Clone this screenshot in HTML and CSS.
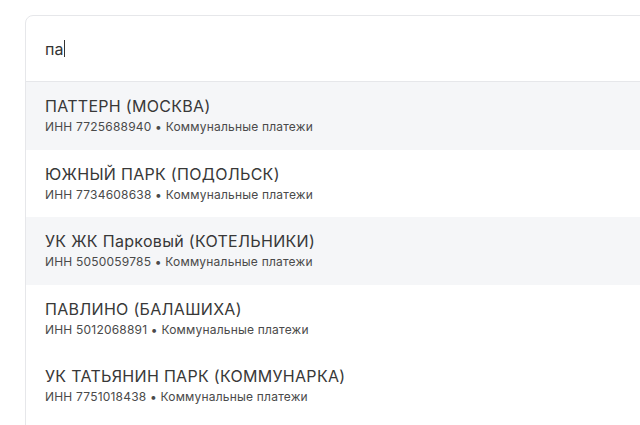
FILE: index.html
```html
<!DOCTYPE html>
<html lang="ru">
<head>
<meta charset="utf-8">
<link rel="stylesheet" href="styles.css">
</head>
<body>
<div class="card">
  <div class="search">
    <span class="query">па</span><span class="caret"></span>
  </div>
  <ul class="list">
    <li class="item alt">
      <div class="title">ПАТТЕРН (МОСКВА)</div>
      <div class="meta">ИНН 7725688940 • Коммунальные платежи</div>
    </li>
    <li class="item">
      <div class="title">ЮЖНЫЙ ПАРК (ПОДОЛЬСК)</div>
      <div class="meta">ИНН 7734608638 • Коммунальные платежи</div>
    </li>
    <li class="item alt">
      <div class="title">УК ЖК Парковый (КОТЕЛЬНИКИ)</div>
      <div class="meta">ИНН 5050059785 • Коммунальные платежи</div>
    </li>
    <li class="item">
      <div class="title">ПАВЛИНО (БАЛАШИХА)</div>
      <div class="meta">ИНН 5012068891 • Коммунальные платежи</div>
    </li>
    <li class="item">
      <div class="title">УК ТАТЬЯНИН ПАРК (КОММУНАРКА)</div>
      <div class="meta">ИНН 7751018438 • Коммунальные платежи</div>
    </li>
  </ul>
</div>
</body>
</html>
```
FILE: styles.css
```css
html, body {
  margin: 0;
  padding: 0;
  background: #ffffff;
  overflow: hidden;
}
body {
  width: 640px;
  height: 425px;
  padding: 15px 0 0 25px;
  box-sizing: border-box;
  font-family: Inter, "Noto Sans", sans-serif;
  color: #333333;
}
.card {
  width: 700px;
  min-height: 430px;
  border: 1px solid #e6e7ea;
  border-radius: 8px 0 0 0;
  background: #ffffff;
}
.search {
  height: 66px;
  display: flex;
  align-items: center;
  padding-left: 19px;
  border-bottom: 1px solid #e6e7ea;
  box-sizing: border-box;
}
.query {
  font-size: 16px;
  color: #333333;
}
.caret {
  display: inline-block;
  width: 1px;
  height: 17px;
  background: #333333;
  margin-left: 1px;
}
.list {
  list-style: none;
  margin: 0;
  padding: 0;
}
.item {
  height: 67.5px;
  padding: 14px 19px 0;
  box-sizing: border-box;
}
.item.alt {
  background: #f5f6f8;
}
.title {
  font-size: 16px;
  line-height: 20px;
  letter-spacing: 0.3px;
  color: #383838;
}
.meta {
  font-size: 12px;
  line-height: 16px;
  letter-spacing: 0.2px;
  margin-top: 3px;
  color: #4a4a4a;
}
```
